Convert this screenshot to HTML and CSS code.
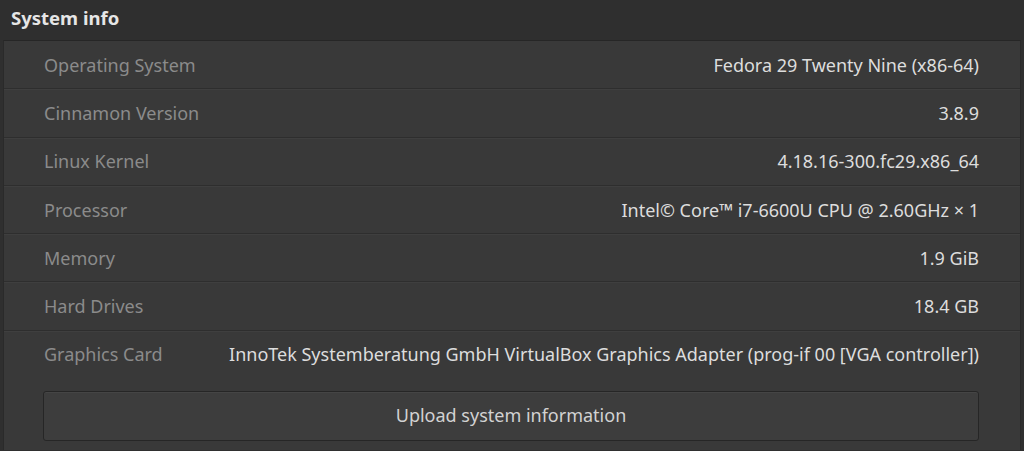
FILE: index.html
```html
<!DOCTYPE html>
<html lang="en">
<head>
  <meta charset="UTF-8" />
  <title>System info</title>
  <link rel="stylesheet" href="styles.css">
</head>
<body>
  <div class="header">System info</div>

  <div class="panel">
    <div class="row"><span class="label">Operating System</span><span class="value">Fedora 29 Twenty Nine (x86-64)</span></div>
    <div class="row"><span class="label">Cinnamon Version</span><span class="value">3.8.9</span></div>
    <div class="row"><span class="label">Linux Kernel</span><span class="value">4.18.16-300.fc29.x86_64</span></div>
    <div class="row"><span class="label">Processor</span><span class="value">Intel© Core™ i7-6600U CPU @ 2.60GHz × 1</span></div>
    <div class="row"><span class="label">Memory</span><span class="value">1.9 GiB</span></div>
    <div class="row"><span class="label">Hard Drives</span><span class="value">18.4 GB</span></div>
    <div class="row last"><span class="label">Graphics Card</span><span class="value">InnoTek Systemberatung GmbH VirtualBox Graphics Adapter (prog-if 00 [VGA controller])</span></div>

    <div class="actions">
      <button class="upload">Upload system information</button>
    </div>
  </div>
</body>
</html>
```

FILE: styles.css
```css
html, body {
  margin: 0;
  height: 100%;
}
body {
  font-family: 'Noto Sans', 'Open Sans', sans-serif;
  font-size: 18px;
  background: #2f2f2f;
  overflow: hidden;
}
.header {
  height: 40px;
  line-height: 35px;
  padding-left: 11px;
  font-size: 18.5px;
  font-weight: bold;
  color: #e6e6e6;
  background: #2f2f2f;
}
.panel {
  margin: 0 3px;
  background: #393939;
  border-top: 1px solid #262626;
  border-left: 1px solid #2a2a2a;
  border-right: 1px solid #2a2a2a;
  height: 410px;
  box-sizing: border-box;
}
.row {
  display: flex;
  justify-content: space-between;
  align-items: center;
  height: 47.3px;
  padding: 0 41px 0 40px;
  border-bottom: 1px solid #2e2e2e;
  box-shadow: 0 1px 0 #3f3f3f;
}
.row.last {
  border-bottom: none;
  box-shadow: none;
}
.label {
  color: #8b8b8b;
}
.value {
  color: #dddddd;
}
.actions {
  padding: 13px 41px 0 39px;
}
.upload {
  display: block;
  width: 100%;
  height: 50px;
  font-family: inherit;
  font-size: 18px;
  color: #d2d2d2;
  background: #3d3d3d;
  border: 1px solid #262626;
  border-radius: 3px;
  box-shadow: inset 0 1px 0 #454545;
  padding-bottom: 4px;
}
```
